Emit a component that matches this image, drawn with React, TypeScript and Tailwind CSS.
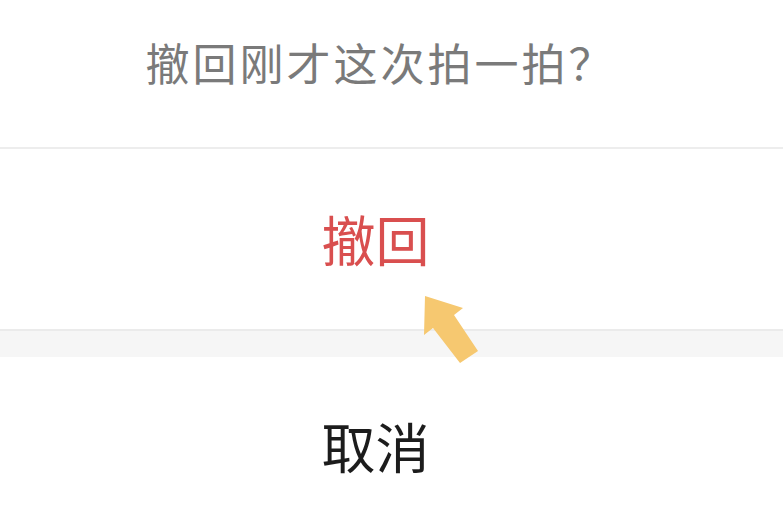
export default function App() {
  return (
    <div className="relative w-full min-h-screen bg-white font-['Noto_Sans_CJK_SC','Noto_Sans',sans-serif] overflow-hidden">
      {/* Title */}
      <div className="h-[147px] flex items-center justify-center text-[44px] leading-none text-[#7a7a7a] tracking-[3px] pb-[24px] pr-[22px]">
        撤回刚才这次拍一拍？
      </div>
      <div className="h-[2px] bg-[#ededed]" />

      {/* Confirm */}
      <button className="w-full h-[180px] flex items-center justify-center text-[54px] leading-none text-[#d94f4f] pr-[32px]">
        撤回
      </button>

      {/* Gap */}
      <div className="h-[2px] bg-[#ebebeb]" />
      <div className="h-[26px] bg-[#f6f6f6]" />

      {/* Cancel */}
      <button className="w-full h-[180px] flex items-center justify-center text-[54px] leading-none text-[#1c1c1c] pb-[2px] pr-[32px]">
        取消
      </button>

      {/* Pointer arrow */}
      <svg className="absolute left-0 top-0 pointer-events-none" width="783" height="521" viewBox="0 0 783 521">
        <polygon
          points="425,296 463,308 454,315 478,351 460,363 433,328 424,335"
          fill="#f6c870"
        />
      </svg>
    </div>
  );
}
